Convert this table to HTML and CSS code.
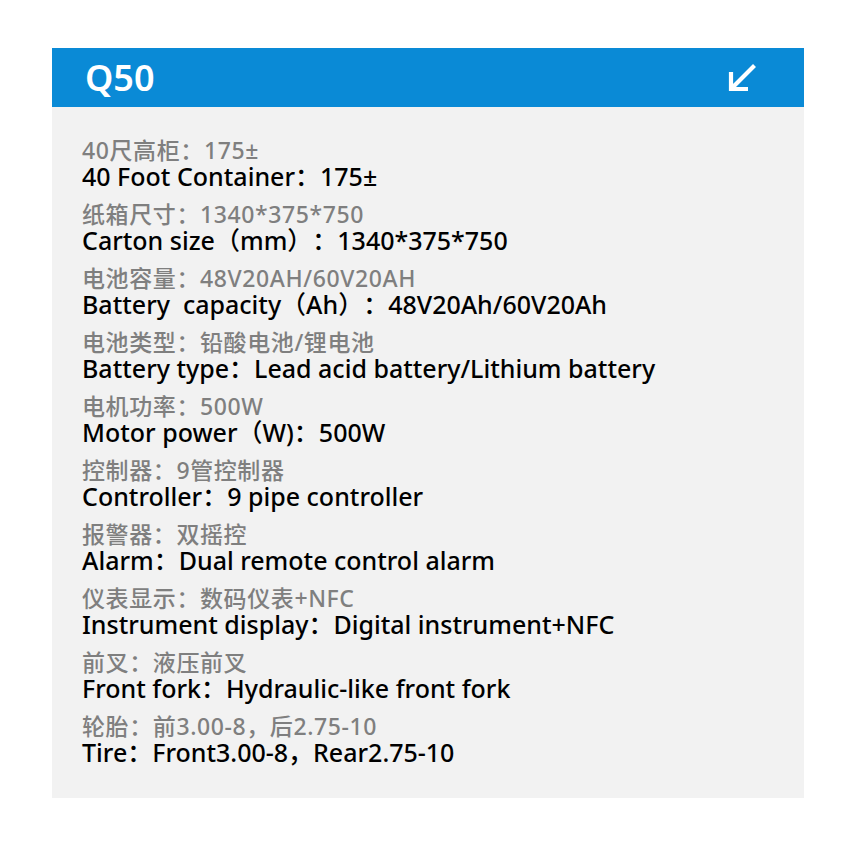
FILE: index.html
```html
<!DOCTYPE html>
<html lang="zh">
<head>
<meta charset="utf-8">
<link rel="stylesheet" href="styles.css">
</head>
<body>
<div class="card">
  <div class="header">
    <h1 class="title">Q50</h1>
    <svg class="arrow" width="32" height="32" viewBox="0 0 32 32">
      <path d="M28.5 3.5 L6 26 M5 10 V27 H22" fill="none" stroke="#fff" stroke-width="4.2" stroke-linecap="butt" stroke-linejoin="miter"/>
    </svg>
  </div>
  <div class="body">
    <div class="item"><div class="cn">40尺高柜：175±</div><div class="en">40 Foot Container：175±</div></div>
    <div class="item"><div class="cn">纸箱尺寸：1340*375*750</div><div class="en">Carton size（mm）：1340*375*750</div></div>
    <div class="item"><div class="cn">电池容量：48V20AH/60V20AH</div><div class="en">Battery&nbsp; capacity（Ah）：48V20Ah/60V20Ah</div></div>
    <div class="item"><div class="cn">电池类型：铅酸电池/锂电池</div><div class="en">Battery type：Lead acid battery/Lithium battery</div></div>
    <div class="item"><div class="cn">电机功率：500W</div><div class="en">Motor power（W)：500W</div></div>
    <div class="item"><div class="cn">控制器：9管控制器</div><div class="en">Controller：9 pipe controller</div></div>
    <div class="item"><div class="cn">报警器：双摇控</div><div class="en">Alarm：Dual remote control alarm</div></div>
    <div class="item"><div class="cn">仪表显示：数码仪表+NFC</div><div class="en">Instrument display：Digital instrument+NFC</div></div>
    <div class="item"><div class="cn">前叉：液压前叉</div><div class="en">Front fork：Hydraulic-like front fork</div></div>
    <div class="item"><div class="cn">轮胎：前3.00-8，后2.75-10</div><div class="en">Tire：Front3.00-8，Rear2.75-10</div></div>
  </div>
</div>
</body>
</html>
```
FILE: styles.css
```css
html, body {
  margin: 0;
  padding: 0;
  background: #fff;
}
body {
  padding: 48px 46px 0 52px;
  font-family: "Noto Sans", "Noto Sans CJK SC", sans-serif;
  text-spacing-trim: space-all;
}
.card {
  width: 752px;
  background: #f2f2f2;
}
.header {
  height: 59px;
  background: #0a8ad6;
  display: flex;
  align-items: center;
  justify-content: space-between;
  padding: 0 46px 0 33px;
}
.title {
  margin: 0;
  color: #fff;
  font-size: 36px;
  font-weight: 600;
  line-height: 1;
}
.arrow {
  display: block;
}
.body {
  padding: 31px 30px 32px 30px;
}
.item {
  margin-bottom: 12px;
}
.item:last-child {
  margin-bottom: 0;
}
.cn {
  color: #7f7f7f;
  font-size: 23px;
  font-weight: 500;
  line-height: 24px;
  letter-spacing: 0.6px;
}
.en {
  color: #000;
  font-size: 25px;
  font-weight: 500;
  line-height: 28px;
}
```
